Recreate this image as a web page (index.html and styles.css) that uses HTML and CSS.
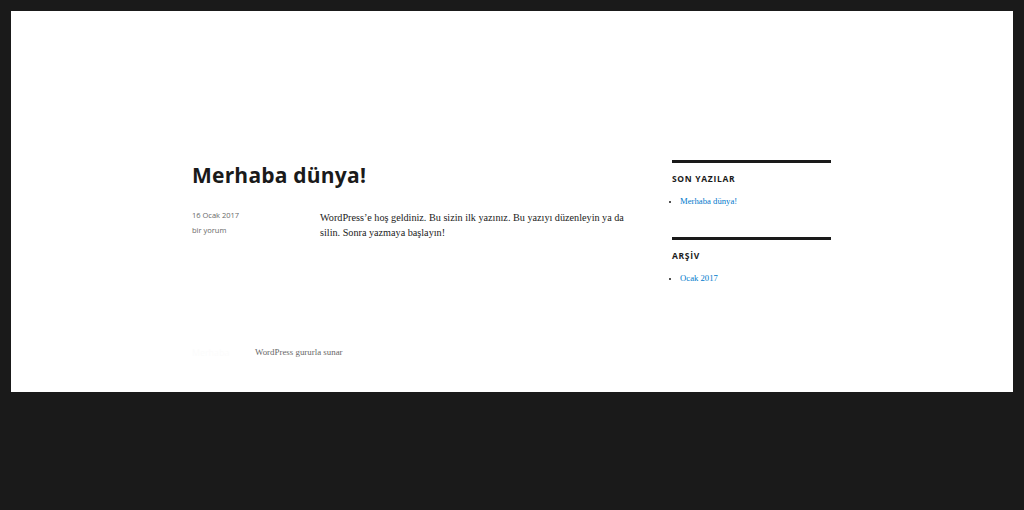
FILE: index.html
```html
<!DOCTYPE html>
<html lang="tr">
<head>
<meta charset="utf-8">
<title>Merhaba dünya!</title>
<link rel="stylesheet" href="styles.css">
</head>
<body>
<div class="site">
  <div class="site-inner">
    <div class="content-area">
      <main class="main">
        <article class="entry">
          <h1 class="entry-title">Merhaba dünya!</h1>
          <div class="entry-body">
            <div class="entry-meta">
              <div class="meta-item">16 Ocak 2017</div>
              <div class="meta-item">bir yorum</div>
            </div>
            <div class="entry-content">
              <p>WordPress’e hoş geldiniz. Bu sizin ilk yazınız. Bu yazıyı düzenleyin ya da silin. Sonra yazmaya başlayın!</p>
            </div>
          </div>
        </article>
      </main>
      <aside class="sidebar">
        <section class="widget">
          <h2 class="widget-title">SON YAZILAR</h2>
          <ul class="widget-list"><li><a href="#">Merhaba dünya!</a></li></ul>
        </section>
        <section class="widget">
          <h2 class="widget-title">ARŞİV</h2>
          <ul class="widget-list"><li><a href="#">Ocak 2017</a></li></ul>
        </section>
      </aside>
    </div>
    <footer class="site-footer">
      <span class="footer-title">Merhaba</span>
      <span class="footer-credit">WordPress gururla sunar</span>
    </footer>
  </div>
</div>
</body>
</html>
```
FILE: styles.css
```css
html, body {
  margin: 0;
  padding: 0;
}
body {
  background: #1a1a1a;
  padding: 11px 11px 0 11px;
  height: 510px;
  box-sizing: border-box;
  font-family: "Liberation Serif", "Times New Roman", serif;
  color: #1a1a1a;
}
.site {
  background: #fff;
  height: 381px;
}
.site-inner {
  padding: 0 181px;
}
.content-area {
  display: flex;
  gap: 40px;
  padding-top: 149px;
}
.main {
  width: 440px;
  flex: none;
}
.entry-title {
  font-family: "Open Sans", "DejaVu Sans", sans-serif;
  font-weight: 700;
  font-size: 21px;
  line-height: 30px;
  margin: 0 0 20px 0;
  letter-spacing: 0.01em;
  color: #1a1a1a;
}
.entry-body {
  display: flex;
}
.entry-meta {
  width: 128px;
  flex: none;
  margin-top: -2px;
  font-family: "Open Sans", "DejaVu Sans", sans-serif;
  font-size: 7.5px;
  color: #686868;
}
.meta-item {
  line-height: 15px;
}
.entry-content {
  width: 322px;
  font-size: 10.2px;
  line-height: 15px;
}
.entry-content p {
  margin: 0;
}
.sidebar {
  width: 159px;
  flex: none;
}
.widget {
  border-top: 3px solid #1a1a1a;
  padding-top: 10px;
  margin-bottom: 28px;
}
.widget-title {
  font-family: "Open Sans", "DejaVu Sans", sans-serif;
  font-weight: 700;
  font-size: 8.5px;
  letter-spacing: 0.08em;
  line-height: 12px;
  margin: 0 0 9px 0;
  color: #1a1a1a;
}
.widget-list {
  margin: 0;
  padding: 0 0 0 8px;
  font-size: 8.7px;
  line-height: 15px;
}
.widget-list li::marker {
  color: #1a1a1a;
  font-size: 7px;
}
.widget-list a {
  color: #007acc;
  text-decoration: none;
}
.site-footer {
  display: flex;
  gap: 8px;
  padding-top: 31px;
  font-size: 8.9px;
  line-height: 15px;
}
.footer-title {
  width: 55px;
  color: #fcfcfc;
  font-family: "Open Sans", sans-serif;
}
.footer-credit {
  color: #686868;
}
```
